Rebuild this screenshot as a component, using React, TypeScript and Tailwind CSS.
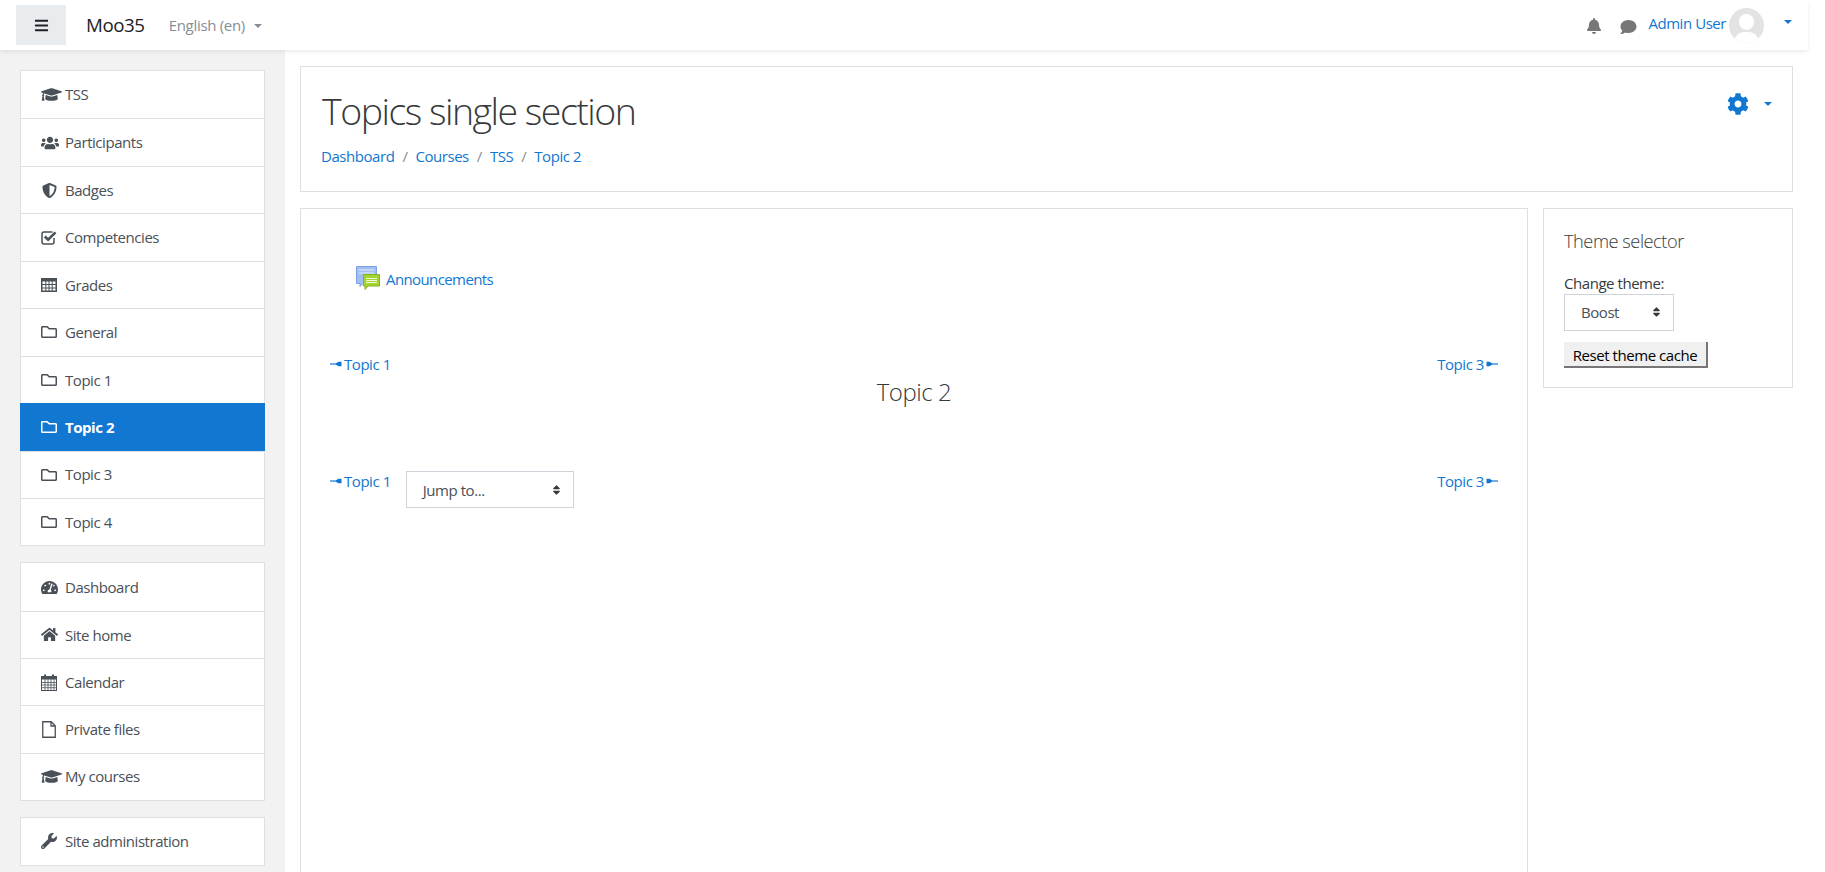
import React from "react";
import { FaBars, FaBell, FaComment, FaCog, FaGraduationCap, FaUsers, FaShieldAlt, FaRegFolder, FaTachometerAlt, FaHome, FaWrench, FaSort } from "react-icons/fa";

const CheckIcon = () => (
  <svg width="16" height="15" viewBox="0 0 16 15" fill="none">
    <path d="M11.500 2H3a2 2 0 0 0-2 2v8a2 2 0 0 0 2 2h8a2 2 0 0 0 2-2V8" stroke="currentColor" strokeWidth="1.500" />
    <path d="M3.800 6.500l3.300 3.200L14.500 2.300" stroke="currentColor" strokeWidth="2.600" />
  </svg>
);
const TableIcon = () => (
  <svg width="16" height="14" viewBox="0 0 16 14" fill="none">
    <rect x="0.750" y="0.750" width="14.500" height="12.500" stroke="currentColor" strokeWidth="1.500" />
    <rect x="1" y="1" width="14" height="2.500" fill="currentColor" />
    <path d="M1 6.500h14M1 10h14M4.800 3v10M8 3v10M11.200 3v10" stroke="currentColor" strokeWidth="1" />
  </svg>
);
const CalendarIcon = () => (
  <svg width="16" height="17" viewBox="0 0 16 17" fill="none">
    <rect x="0.500" y="2.500" width="15" height="14" fill="#fff" stroke="currentColor" />
    <rect x="0" y="2" width="16" height="3.500" fill="currentColor" />
    <path d="M1 8.500h14M1 11h14M1 13.700h14M4 5v11M7 5v11M10 5v11M13 5v11" stroke="currentColor" strokeWidth="0.800" />
    <path d="M4 0.500v4M12 0.500v4" stroke="currentColor" strokeWidth="2" />
  </svg>
);
const FileIcon = () => (
  <svg width="14" height="17" viewBox="0 0 14 17" fill="none">
    <path d="M.750.750h8.500l4 4v11.500H.750zM9 1v4h4" stroke="currentColor" strokeWidth="1.300" />
  </svg>
);

type Item = { icon: React.ReactNode; label: string; active?: boolean };

const folder = <FaRegFolder size={16} />;
const cap = <FaGraduationCap size={21} />;

const course: Item[] = [
  { icon: cap, label: "TSS" },
  { icon: <FaUsers size={18} />, label: "Participants" },
  { icon: <span className="ml-[1px] inline-flex"><FaShieldAlt size={15} /></span>, label: "Badges" },
  { icon: <CheckIcon />, label: "Competencies" },
  { icon: <TableIcon />, label: "Grades" },
  { icon: folder, label: "General" },
  { icon: folder, label: "Topic 1" },
  { icon: folder, label: "Topic 2", active: true },
  { icon: folder, label: "Topic 3" },
  { icon: folder, label: "Topic 4" },
];
const site: Item[] = [
  { icon: <FaTachometerAlt size={17} />, label: "Dashboard" },
  { icon: <FaHome size={17} />, label: "Site home" },
  { icon: <CalendarIcon />, label: "Calendar" },
  { icon: <span className="ml-px inline-flex"><FileIcon /></span>, label: "Private files" },
  { icon: cap, label: "My courses" },
];

function NavCard({ items, rowHeight }: { items: Item[]; rowHeight: string }) {
  return (
    <div className="border border-[#dfdfdf] bg-white">
      {items.map((it, i) => (
        <div
          key={it.label}
          className={
            "flex items-center " + rowHeight + " " +
            (it.active
              ? "-mx-px bg-[#1177d1] pl-[21px] font-bold text-white"
              : "pl-[20px] text-[#495057] " + (i > 0 ? "border-t border-[#dfdfdf]" : ""))
          }
        >
          <span className="flex w-[24px] shrink-0 items-center">{it.icon}</span>
          <span>{it.label}</span>
        </div>
      ))}
    </div>
  );
}

function Caret({ className }: { className?: string }) {
  return <span className={"inline-block border-x-[4.5px] border-t-[4.5px] border-x-transparent " + (className ?? "")} />;
}

function ArrowL() {
  return (
    <svg width="13" height="6" viewBox="0 0 13 6" className="inline-block">
      <path d="M0 3h8" stroke="#1177d1" strokeWidth="1.200" />
      <path d="M6 2.200L8.500.800h3v4.400h-3L6 3.800z" fill="#1177d1" />
    </svg>
  );
}
function ArrowR() {
  return (
    <svg width="13" height="6" viewBox="0 0 13 6" className="inline-block">
      <path d="M13 3H5" stroke="#1177d1" strokeWidth="1.200" />
      <path d="M7 2.200L4.500.800h-3v4.400h3L7 3.800z" fill="#1177d1" />
    </svg>
  );
}

function ForumIcon() {
  return (
    <svg width="24" height="24" viewBox="0 0 24 24" className="shrink-0">
      <path d="M.5.500h20v17H7l-3 3v-3H.500z" fill="#a3bff2" stroke="#7da0e6" strokeWidth="1" />
      <path d="M3 4h15M3 7h15" stroke="#e4ecfc" strokeWidth="1" />
      <path d="M7.500 8.500h16v11.500H12l-3 3.500V20H7.500z" fill="#a3d42f" stroke="#82b321" strokeWidth="1" />
      <path d="M10 12.500h11M10 14.500h11M10 16.500h11" stroke="#f0f9d6" strokeWidth="1" />
    </svg>
  );
}

export default function App() {
  return (
    <div
      className="h-[872px] w-[1825px] overflow-hidden bg-white text-[15px] text-[#373a3c]"
      style={{ fontFamily: '"Open Sans", "Noto Sans", sans-serif', letterSpacing: "-0.45px" }}
    >
      <div className="w-[1808px]">
        <header className="relative z-10 flex h-[50px] items-center bg-white pl-[16px] pr-[16px] shadow-[0_2px_4px_rgba(0,0,0,0.08)]">
          <div className="flex h-[40px] w-[50px] items-center justify-center bg-[#e9ecef] text-[#1d2125]">
            <FaBars className="h-[15px] w-[15px]" />
          </div>
          <span className="ml-[20px] mt-[1px] text-[18.75px] text-[#1d2125]">Moo35</span>
          <span className="ml-[24px] mt-[1px] flex items-center tracking-[-0.3px] text-[#868e96]">
            English (en)
            <Caret className="ml-[9px] border-t-[#868e96]" />
          </span>
          <div className="ml-auto flex items-center">
            <FaBell className="mt-[1px] ml-[1px] h-[16px] w-[16px] text-[#777]" />
            <FaComment className="ml-[18px] mt-[3px] h-[16px] w-[17px] text-[#777]" />
            <span className="ml-[11px] -mt-[4px] text-[#1177d1]">Admin User</span>
            <div className="relative ml-[3px] h-[35px] w-[35px] overflow-hidden rounded-full bg-[#e3e3e3]">
              <div className="absolute left-[10px] top-[6px] h-[16px] w-[15px] rounded-full bg-white" />
              <div className="absolute left-[5px] top-[24px] h-[20px] w-[25px] rounded-full bg-white" />
            </div>
            <Caret className="ml-[20px] -mt-[6px] border-t-[#1177d1]" />
          </div>
        </header>

        <div className="flex">
          <aside className="flex h-[822px] w-[285px] shrink-0 flex-col gap-[16px] bg-[#f2f2f2] px-[20px] pt-[20px]">
            <NavCard items={course} rowHeight="h-[47.45px]" />
            <NavCard items={site} rowHeight="h-[47.3px]" />
            <NavCard items={[{ icon: <FaWrench size={16} />, label: "Site administration" }]} rowHeight="h-[47px]" />
          </aside>

          <main className="flex min-w-0 flex-1 flex-col gap-[16px] pl-[15px] pr-[15px] pt-[16px]">
            <section className="relative h-[126px] border border-[#dfdfdf] px-[20px] pt-[21px]">
              <h1 className="ml-[1px] text-[37.5px] font-light leading-[45px] tracking-[-1.5px] text-[#373a3c]">Topics single section</h1>
              <nav className="mt-[12px] flex items-center text-[#1177d1]">
                <span>Dashboard</span>
                <span className="mx-[8px] text-[#868e96]">/</span>
                <span>Courses</span>
                <span className="mx-[8px] text-[#868e96]">/</span>
                <span>TSS</span>
                <span className="mx-[8px] text-[#868e96]">/</span>
                <span>Topic 2</span>
              </nav>
              <div className="absolute right-[20px] top-[26px] flex items-center text-[#1177d1]">
                <FaCog className="h-[22px] w-[22px]" />
                <Caret className="ml-[15px] border-t-[#1177d1]" />
              </div>
            </section>

            <div className="flex gap-[15px]">
              <section className="h-[700px] min-w-0 flex-1 border border-[#dfdfdf] px-[29px] text-[#1177d1]">
                <div className="flex items-center gap-[6px] pl-[26px] pt-[56px] tracking-[-0.6px]">
                  <ForumIcon />
                  <span className="mt-[3px]">Announcements</span>
                </div>
                <div className="mt-[62px] flex justify-between">
                  <span className="flex items-center gap-[1px]"><ArrowL />Topic 1</span>
                  <span className="flex items-center gap-[1px]">Topic 3<ArrowR /></span>
                </div>
                <h3 className="mt-[2px] text-center text-[24px] font-light leading-[29px] text-[#373a3c]">Topic 2</h3>
                <div className="mt-[64px] flex items-start justify-between">
                  <div className="flex items-start">
                    <span className="flex items-center gap-[1px]"><ArrowL />Topic 1</span>
                    <div className="ml-[15px] mt-[1px] flex h-[37px] w-[168px] items-center justify-between border border-[#ced4da] pl-[16px] pr-[12px] text-[#495057]">
                      <span className="mt-[1px]">Jump to...</span>
                      <FaSort className="h-[12px] w-[9px] text-[#373a3c]" />
                    </div>
                  </div>
                  <span className="flex items-center gap-[1px]">Topic 3<ArrowR /></span>
                </div>
              </section>

              <aside className="h-[180px] w-[250px] shrink-0 border border-[#dfdfdf] px-[20px] pt-[21px]">
                <h5 className="text-[18.2px] font-light leading-[22px] text-[#373a3c]">Theme selector</h5>
                <div className="mt-[20px] -mb-[1px] text-[#373a3c]">Change theme:</div>
                <div className="flex h-[37px] w-[110px] items-center justify-between border border-[#ced4da] pl-[16px] pr-[12px] text-[#495057]">
                  <span className="mt-[1px]">Boost</span>
                  <FaSort className="h-[12px] w-[9px] text-[#373a3c]" />
                </div>
                <button className="mt-[11px] block h-[26px] w-[144px] border-b-2 border-r-2 border-[#767676] bg-[#f0f0f0] pt-[2px] text-center text-black">
                  Reset theme cache
                </button>
              </aside>
            </div>
          </main>
        </div>
      </div>
    </div>
  );
}
